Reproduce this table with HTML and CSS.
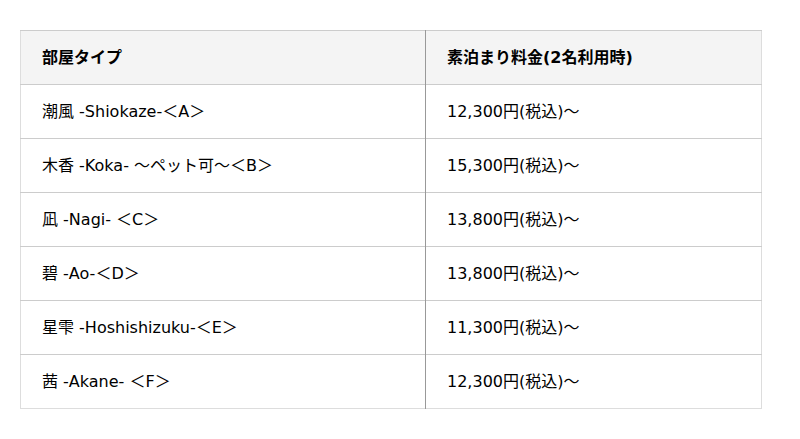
FILE: index.html
```html
<!DOCTYPE html>
<html lang="ja">
<head>
<meta charset="utf-8">
<link rel="stylesheet" href="styles.css">
</head>
<body>
<table class="rooms">
  <thead>
    <tr><th class="c1">部屋タイプ</th><th class="c2">素泊まり料金(2名利用時)</th></tr>
  </thead>
  <tbody>
    <tr><td>潮風 -Shiokaze-＜A＞</td><td>12,300円(税込)〜</td></tr>
    <tr><td>木香 -Koka- 〜ペット可〜＜B＞</td><td>15,300円(税込)〜</td></tr>
    <tr><td>凪 -Nagi- ＜C＞</td><td>13,800円(税込)〜</td></tr>
    <tr><td>碧 -Ao-＜D＞</td><td>13,800円(税込)〜</td></tr>
    <tr><td>星雫 -Hoshishizuku-＜E＞</td><td>11,300円(税込)〜</td></tr>
    <tr><td>茜 -Akane- ＜F＞</td><td>12,300円(税込)〜</td></tr>
  </tbody>
</table>
</body>
</html>
```
FILE: styles.css
```css
html, body { margin: 0; padding: 0; background: #fff; }
body {
  padding: 30px 38px 0 20px;
  font-family: "DejaVu Sans", "Noto Sans CJK JP", sans-serif;
  font-size: 16px;
  color: #000;
}
.rooms {
  width: 742px;
  border-collapse: collapse;
  border: 1px solid #ddd;
}
.rooms th, .rooms td {
  height: 54px;
  padding: 0 0 4px 21px;
  text-align: left;
  vertical-align: middle;
  border-top: 1px solid #ccc;
  box-sizing: border-box;
}
.rooms th {
  background: #f4f4f4;
  font-weight: bold;
  font-size: 16px;
}
.rooms .c1 { width: 405px; }
.rooms th:first-child, .rooms td:first-child {
  border-right: 1px solid #999;
}
```
